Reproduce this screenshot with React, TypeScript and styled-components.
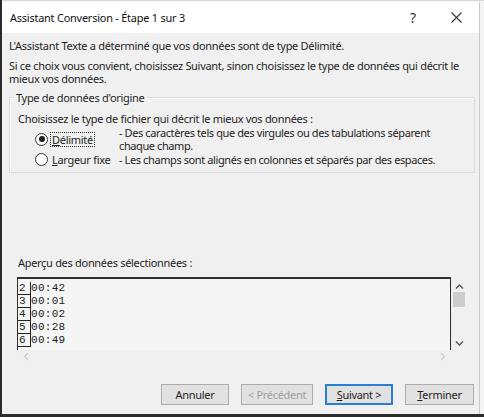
import React from 'react'
import { styled, createGlobalStyle } from 'styled-components'

const GlobalStyle = createGlobalStyle`
  html, body {
    margin: 0;
    padding: 0;
    background: #e9e9e9;
  }
  body {
    font-family: 'Noto Sans', 'Open Sans', sans-serif;
    color: #1e1e1e;
  }
`

const Frame = styled.div`
  width: 484px;
  height: 417px;
  box-sizing: border-box;
  padding-top: 2px;
  border-left: 2px solid #2b2b2b;
  border-bottom: 3px solid #2b2b2b;
  display: flex;
  background: linear-gradient(#d8d8d8, #d8d8d8) top / 100% 1px no-repeat, #f4f4f4;
`

const Dialog = styled.div`
  width: 477px;
  display: flex;
  flex-direction: column;
  background: #f0f0f0;
  border-right: 1px solid #c9c9c9;
`

const TitleBar = styled.div`
  height: 31px;
  background: #fff;
  display: flex;
  align-items: center;
  padding: 0 0 0 8px;
  font-size: 10.9px;
  color: #111;
`

const Title = styled.div`
  flex: 1;
  letter-spacing: -0.2px;
`

const TitleButton = styled.div<{ $w: number }>`
  width: ${p => p.$w}px;
  display: flex;
  justify-content: center;
  font-size: 14px;
  color: #333;
`

const Content = styled.div`
  flex: 1;
  display: flex;
  flex-direction: column;
  padding: 0 0 0 7px;
  font-size: 11px;
  line-height: 13px;
  letter-spacing: -0.3px;
`

const Para = styled.p<{ $top: number }>`
  margin: ${p => p.$top}px 0 0 0;
  width: 462px;
`

const Group = styled.fieldset`
  margin: 6px 0 0 0;
  width: 466px;
  box-sizing: border-box;
  height: 82px;
  padding: 8px 0 0 8px;
  border: 1px solid #dcdcdc;
  box-shadow: inset 1px 1px 0 #fff;
`

const Legend = styled.legend`
  padding: 0 2px;
  margin-left: -4px;
`

const OptionRow = styled.div<{ $top: number }>`
  display: flex;
  margin-top: ${p => p.$top}px;
`

const RadioLabel = styled.label`
  width: 101px;
  display: flex;
  align-items: center;
  align-self: center;
  padding-left: 17px;
  box-sizing: border-box;
`

const Radio = styled.span<{ $checked?: boolean }>`
  width: 11px;
  height: 11px;
  border: 1px solid #333;
  border-radius: 50%;
  background: #fff;
  display: flex;
  align-items: center;
  justify-content: center;
  margin: 0 3px 0 0;
  flex-shrink: 0;

  &::after {
    content: '';
    width: 6px;
    height: 6px;
    border-radius: 50%;
    background: ${p => (p.$checked ? '#1a1a1a' : 'transparent')};
  }
`

const LabelText = styled.span<{ $focus?: boolean }>`
  outline: ${p => (p.$focus ? '1px dotted #333' : 'none')};
  outline-offset: 0;
  padding: 0 1px;
`

const Desc = styled.div`
  width: 340px;
  letter-spacing: -0.4px;
`

const Spacer = styled.div`
  height: 83px;
`

const PreviewLabel = styled.div`
  margin-left: 9px;
`

const Preview = styled.div`
  margin: 8px 0 0 8px;
  display: grid;
  grid-template-columns: 434px 16px;
  grid-template-rows: 73px 13px;
`

const PreviewBody = styled.div`
  border-top: 2px solid #2e2e2e;
  border-left: 1px solid #2e2e2e;
  border-right: 1px solid #2e2e2e;
  background: #f5f5f5;
  padding-top: 3px;
  overflow: hidden;
`

const DataRow = styled.div`
  display: flex;
  height: 13px;
  font-family: 'Liberation Mono', 'Courier New', monospace;
  font-size: 11px;
  line-height: 13px;
  letter-spacing: 0.3px;
  color: #222;
`

const RowNum = styled.span`
  width: 13px;
  border-right: 1px solid #222;
  border-bottom: 1px solid #222;
  box-sizing: border-box;
  padding-left: 1px;
  line-height: 12px;
`

const VScroll = styled.div`
  display: flex;
  flex-direction: column;
  align-items: center;
  padding: 6px 0 3px;
`

const Thumb = styled.div`
  width: 12px;
  height: 15px;
  background: #cdcdcd;
  margin-top: 2px;
`

const HScroll = styled.div`
  display: flex;
  justify-content: space-between;
  padding: 0 5px 0 6px;
  align-items: center;
`

const ButtonBar = styled.div`
  display: flex;
  justify-content: flex-end;
  gap: 12px;
  padding-right: 5px;
  margin-top: 21px;
`

const Button = styled.div<{ $w: number; $disabled?: boolean; $default?: boolean }>`
  width: ${p => p.$w}px;
  height: 21px;
  box-sizing: border-box;
  background: #e1e1e1;
  border: 1px solid ${p => (p.$default ? '#2a7fd4' : '#adadad')};
  box-shadow: ${p => (p.$default ? 'inset 0 0 0 1px #2a7fd4' : 'none')};
  color: ${p => (p.$disabled ? '#a0a0a0' : '#1e1e1e')};
  display: flex;
  align-items: center;
  justify-content: center;
  font-size: 11px;
`

const Chevron = ({ d }: { d: string }) => (
  <svg width={9} height={7} viewBox="0 0 9 7">
    <path d={d} fill="none" stroke="#555" strokeWidth={1.4} />
  </svg>
)

const rows = [
  ['2', '00:42'],
  ['3', '00:01'],
  ['4', '00:02'],
  ['5', '00:28'],
  ['6', '00:49'],
]

export default function App() {
  return (
    <>
      <GlobalStyle />
      <Frame>
        <Dialog>
          <TitleBar>
            <Title>Assistant Conversion - Étape 1 sur 3</Title>
            <TitleButton $w={40}>?</TitleButton>
            <TitleButton $w={46}>
              <svg width="11" height="11" viewBox="0 0 11 11">
                <path d="M0.5 0.5 L10.5 10.5 M10.5 0.5 L0.5 10.5" stroke="#333" strokeWidth={1.1} />
              </svg>
            </TitleButton>
          </TitleBar>
          <Content>
            <Para $top={6}>L'Assistant Texte a déterminé que vos données sont de type Délimité.</Para>
            <Para $top={7}>
              Si ce choix vous convient, choisissez Suivant, sinon choisissez le type de données qui décrit le
              mieux vos données.
            </Para>
            <Group>
              <Legend>Type de données d'origine</Legend>
              <div>Choisissez le type de fichier qui décrit le mieux vos données :</div>
              <OptionRow $top={1}>
                <RadioLabel>
                  <Radio $checked />
                  <LabelText $focus>
                    <u>D</u>élimité
                  </LabelText>
                </RadioLabel>
                <Desc>- Des caractères tels que des virgules ou des tabulations séparent chaque champ.</Desc>
              </OptionRow>
              <OptionRow $top={1}>
                <RadioLabel>
                  <Radio />
                  <LabelText>
                    <u>L</u>argeur fixe
                  </LabelText>
                </RadioLabel>
                <Desc>- Les champs sont alignés en colonnes et séparés par des espaces.</Desc>
              </OptionRow>
            </Group>
            <Spacer />
            <PreviewLabel>Aperçu des données sélectionnées :</PreviewLabel>
            <Preview>
              <PreviewBody>
                {rows.map(([n, v]) => (
                  <DataRow key={n}>
                    <RowNum>{n}</RowNum>
                    <span>{v}</span>
                  </DataRow>
                ))}
              </PreviewBody>
              <VScroll>
                <Chevron d="M1 5.5 L4.5 2 L8 5.5" />
                <Thumb />
                <div style={{ flex: 1 }} />
                <Chevron d="M1 1.5 L4.5 5 L8 1.5" />
              </VScroll>
              <HScroll>
                <svg width="6" height="9" viewBox="0 0 6 9">
                  <path d="M5 1 L1.5 4.5 L5 8" fill="none" stroke="#c8c8c8" strokeWidth={1.2} />
                </svg>
                <svg width="6" height="9" viewBox="0 0 6 9">
                  <path d="M1 1 L4.5 4.5 L1 8" fill="none" stroke="#c8c8c8" strokeWidth={1.2} />
                </svg>
              </HScroll>
            </Preview>
            <ButtonBar>
              <Button $w={68}>Annuler</Button>
              <Button $w={72} $disabled>
                &lt; Précédent
              </Button>
              <Button $w={68} $default>
                <span>
                  <u>S</u>uivant &gt;
                </span>
              </Button>
              <Button $w={69}>
                <span>
                  <u>T</u>erminer
                </span>
              </Button>
            </ButtonBar>
          </Content>
        </Dialog>
      </Frame>
    </>
  )
}
